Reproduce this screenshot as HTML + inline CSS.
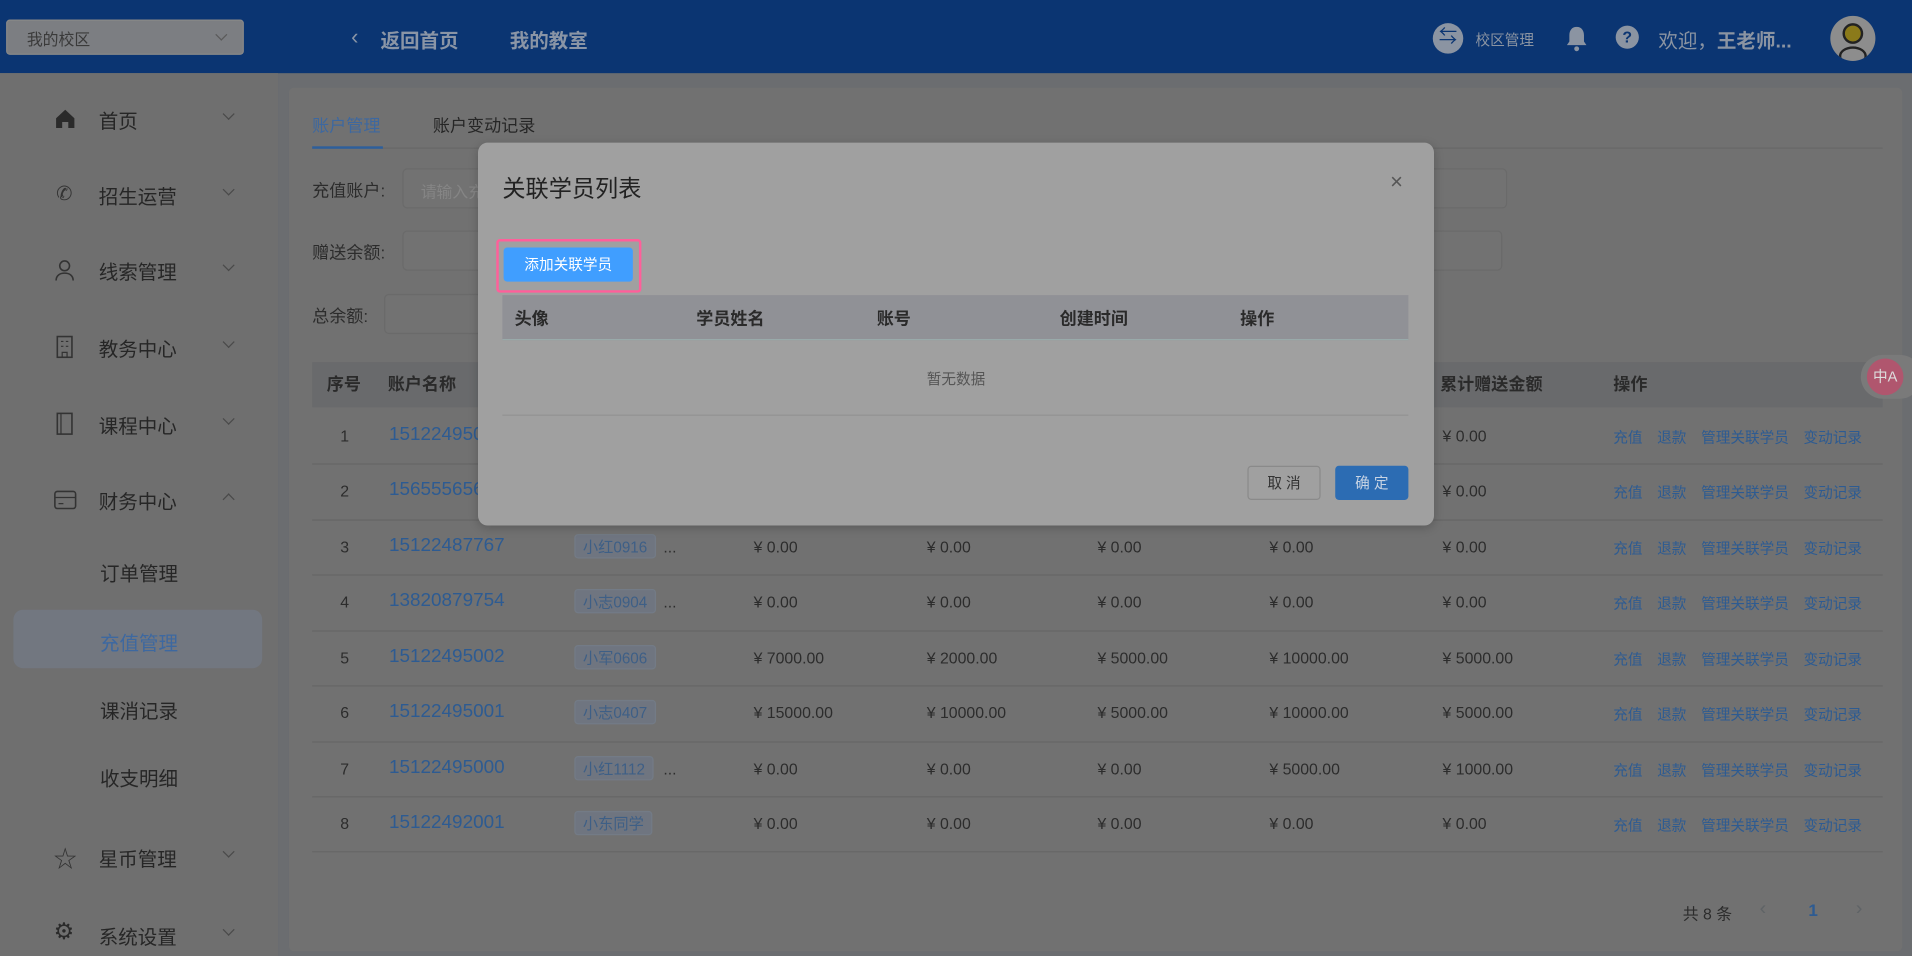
<!DOCTYPE html>
<html><head><meta charset="utf-8"><style>
*{margin:0;padding:0;box-sizing:border-box}
html,body{width:1912px;height:956px;overflow:hidden;background:#6b6d70}
#w{position:absolute;left:0;top:0;width:1568px;height:784px;transform:scale(1.219388);transform-origin:0 0;font-family:"Liberation Sans","Noto Sans CJK SC",sans-serif;color:#2b2b2b;background:#6b6d70}
.a{position:absolute;white-space:nowrap}
.hd{position:absolute;left:0;top:0;width:1568px;height:60px;background:#0b3572}
.sb{position:absolute;left:0;top:60px;width:228px;height:724px;background:#6f6f6f}
.card{position:absolute;left:237px;top:72px;width:1323px;height:708px;background:#717171;border-radius:4px}
.mi{font-size:16px;color:#262626}
.chev{position:absolute;width:7px;height:7px;border-right:1px solid #4a4a4a;border-bottom:1px solid #4a4a4a;transform:rotate(45deg)}
.row{position:absolute;left:256px;width:1288px;height:1px;background:#666}
.t{font-size:13px;color:#2c2c2c}
.lk{font-size:12px;color:#2d5b92;word-spacing:1px}
.lk span{margin-right:12px}
.tag{position:absolute;height:20px;padding:0 6px;font-size:12.5px;line-height:20px;color:#3e5f86;background:#6f7580;border:1px solid #737b86;border-radius:3px}
.inp{position:absolute;height:33px;border:1px solid #6a6a6a;border-radius:4px;background:#727272}
.num{font-size:15.5px;color:#2d5b92}
</style></head><body><div id="w">
<div class="hd"></div>
<div class="a" style="left:5px;top:16px;width:195px;height:29px;background:#7c7e82;border-radius:3px;border:1px solid #888"></div>
<div class="a" style="left:22px;top:22px;font-size:13px;color:#3a3a3a">我的校区</div>
<div class="chev" style="left:178px;top:25px;border-color:#5a5a5a"></div>
<div class="a" style="left:288px;top:20px;font-size:18px;color:#8a95a6">‹</div>
<div class="a" style="left:312px;top:20px;font-size:16px;font-weight:bold;color:#8a95a6">返回首页</div>
<div class="a" style="left:418px;top:20px;font-size:16px;font-weight:bold;color:#8a95a6">我的教室</div>
<div class="a" style="left:1175px;top:19px;width:25px;height:25px;border-radius:50%;background:#8b94a2;color:#0b3572;font-size:15px;text-align:center;line-height:24px">⇆</div>
<div class="a" style="left:1210px;top:24px;font-size:12px;color:#8b94a2">校区管理</div>
<svg class="a" style="left:1283px;top:21px" width="20" height="22" viewBox="0 0 20 22"><path d="M10 1c-4 0-6 3-6 7v5l-2 3h16l-2-3V8c0-4-2-7-6-7z" fill="#8b94a2"/><circle cx="10" cy="19" r="2" fill="#8b94a2"/></svg>
<div class="a" style="left:1325px;top:21px;width:19px;height:19px;border-radius:50%;background:#8b94a2;color:#0b3572;font-size:13px;font-weight:bold;text-align:center;line-height:19px">?</div>
<div class="a" style="left:1360px;top:20px;font-size:16px;color:#8b94a2">欢迎，<b>王老师...</b></div>
<div class="a" style="left:1501px;top:13px;width:37px;height:37px;border-radius:50%;background:#8d8d8d;overflow:hidden"><div style="position:absolute;left:10px;top:6px;width:17px;height:17px;border-radius:50%;background:#8b7a1a;border:2px solid #222"></div><div style="position:absolute;left:7px;top:25px;width:23px;height:16px;border-radius:50%;border:2px solid #222"></div></div>

<div class="sb"></div>
<svg class="a" style="left:45px;top:89px" width="17" height="17" viewBox="0 0 17 17"><path d="M8.5 1L1 8v8h5v-5h5v5h5V8z" fill="#2a2a2a"/></svg>
<div class="a mi" style="left:81px;top:86px">首页</div><div class="chev" style="left:184px;top:90px"></div>
<div class="a" style="left:46px;top:149px;font-size:16px;color:#333">✆</div>
<div class="a mi" style="left:81px;top:148px">招生运营</div><div class="chev" style="left:184px;top:152px"></div>
<svg class="a" style="left:45px;top:212px" width="16" height="19" viewBox="0 0 16 19"><circle cx="8" cy="6" r="4" fill="none" stroke="#333" stroke-width="1.3"/><path d="M1 18c0-4 3-6 7-6s7 2 7 6" fill="none" stroke="#333" stroke-width="1.3"/></svg>
<div class="a mi" style="left:81px;top:210px">线索管理</div><div class="chev" style="left:184px;top:214px"></div>
<svg class="a" style="left:45px;top:275px" width="16" height="19" viewBox="0 0 16 19"><rect x="2" y="1" width="12" height="17" fill="none" stroke="#333" stroke-width="1.3"/><path d="M5 5h2M9 5h2M5 9h2M9 9h2M6 18v-4h4v4" stroke="#333" fill="none"/></svg>
<div class="a mi" style="left:81px;top:273px">教务中心</div><div class="chev" style="left:184px;top:277px"></div>
<svg class="a" style="left:45px;top:338px" width="16" height="19" viewBox="0 0 16 19"><rect x="2" y="1" width="12" height="17" fill="none" stroke="#333" stroke-width="1.3"/><path d="M5 1v17" stroke="#333"/></svg>
<div class="a mi" style="left:81px;top:336px">课程中心</div><div class="chev" style="left:184px;top:340px"></div>
<svg class="a" style="left:44px;top:402px" width="19" height="16" viewBox="0 0 19 16"><rect x="1" y="1" width="17" height="14" rx="2" fill="none" stroke="#333" stroke-width="1.3"/><path d="M1 6h17M4 11h4" stroke="#333"/></svg>
<div class="a mi" style="left:81px;top:398px">财务中心</div><div class="chev" style="left:184px;top:406px;transform:rotate(225deg)"></div>
<div class="a mi" style="left:82px;top:457px">订单管理</div>
<div class="a" style="left:11px;top:500px;width:204px;height:48px;background:#727780;border-radius:8px"></div>
<div class="a mi" style="left:82px;top:514px;color:#3d68a0">充值管理</div>
<div class="a mi" style="left:82px;top:570px">课消记录</div>
<div class="a mi" style="left:82px;top:625px">收支明细</div>
<div class="a" style="left:44px;top:690px;font-size:19px;color:#333">☆</div>
<div class="a mi" style="left:81px;top:691px">星币管理</div><div class="chev" style="left:184px;top:695px"></div>
<div class="a" style="left:44px;top:753px;font-size:19px;color:#2a2a2a">⚙</div>
<div class="a mi" style="left:81px;top:755px">系统设置</div><div class="chev" style="left:184px;top:759px"></div>

<div class="card"></div>
<div class="a" style="left:256px;top:93px;font-size:14px;color:#3d68a0">账户管理</div>
<div class="a" style="left:355px;top:93px;font-size:14px;color:#262626">账户变动记录</div>
<div class="a" style="left:256px;top:121px;width:1288px;height:1px;background:#686868"></div>
<div class="a" style="left:256px;top:120px;width:58px;height:2px;background:#2d5f9c"></div>
<div class="a t" style="left:256px;top:146px;font-size:14px">充值账户:</div>
<div class="inp" style="left:330px;top:138px;width:906px"></div>
<div class="a" style="left:345px;top:147px;font-size:13px;color:#858585">请输入充</div>
<div class="a t" style="left:256px;top:197px;font-size:14px">赠送余额:</div>
<div class="inp" style="left:330px;top:189px;width:902px"></div>
<div class="a t" style="left:256px;top:249px;font-size:14px">总余额:</div>
<div class="inp" style="left:315px;top:241px;width:200px"></div>

<div class="a" style="left:256px;top:297px;width:1288px;height:37px;background:#696a6c"></div>
<div class="a" style="left:268px;top:305px;font-size:14px;font-weight:bold;color:#2a2a2a">序号</div>
<div class="a" style="left:318px;top:305px;font-size:14px;font-weight:bold;color:#2a2a2a">账户名称</div>
<div class="a" style="left:1181px;top:305px;font-size:14px;font-weight:bold;color:#2a2a2a">累计赠送金额</div>
<div class="a" style="left:1323px;top:305px;font-size:14px;font-weight:bold;color:#2a2a2a">操作</div>

<div class="a t" style="left:279px;top:350px">1</div><div class="a num" style="left:319px;top:348px">151224950</div>
<div class="a t" style="left:279px;top:395px">2</div><div class="a num" style="left:319px;top:393px">156555656</div>
<div class="row" style="top:380px"></div><div class="row" style="top:426px"></div><div class="row" style="top:471px"></div><div class="row" style="top:517px"></div><div class="row" style="top:562px"></div><div class="row" style="top:608px"></div><div class="row" style="top:653px"></div><div class="row" style="top:698px"></div>
<div class="a t" style="left:1183px;top:350px">¥ 0.00</div><div class="a t" style="left:1183px;top:395px">¥ 0.00</div>

<div class="a t" style="left:279px;top:441px">3</div><div class="a num" style="left:319px;top:439px">15122487767</div><div class="tag" style="left:471px;top:438px">小红0916</div><div class="a t" style="left:544px;top:441px">...</div>
<div class="a t" style="left:618px;top:441px">¥ 0.00</div><div class="a t" style="left:760px;top:441px">¥ 0.00</div><div class="a t" style="left:900px;top:441px">¥ 0.00</div><div class="a t" style="left:1041px;top:441px">¥ 0.00</div><div class="a t" style="left:1183px;top:441px">¥ 0.00</div>

<div class="a t" style="left:279px;top:486px">4</div><div class="a num" style="left:319px;top:484px">13820879754</div><div class="tag" style="left:471px;top:483px">小志0904</div><div class="a t" style="left:544px;top:486px">...</div>
<div class="a t" style="left:618px;top:486px">¥ 0.00</div><div class="a t" style="left:760px;top:486px">¥ 0.00</div><div class="a t" style="left:900px;top:486px">¥ 0.00</div><div class="a t" style="left:1041px;top:486px">¥ 0.00</div><div class="a t" style="left:1183px;top:486px">¥ 0.00</div>

<div class="a t" style="left:279px;top:532px">5</div><div class="a num" style="left:319px;top:530px">15122495002</div><div class="tag" style="left:471px;top:529px">小军0606</div>
<div class="a t" style="left:618px;top:532px">¥ 7000.00</div><div class="a t" style="left:760px;top:532px">¥ 2000.00</div><div class="a t" style="left:900px;top:532px">¥ 5000.00</div><div class="a t" style="left:1041px;top:532px">¥ 10000.00</div><div class="a t" style="left:1183px;top:532px">¥ 5000.00</div>

<div class="a t" style="left:279px;top:577px">6</div><div class="a num" style="left:319px;top:575px">15122495001</div><div class="tag" style="left:471px;top:574px">小志0407</div>
<div class="a t" style="left:618px;top:577px">¥ 15000.00</div><div class="a t" style="left:760px;top:577px">¥ 10000.00</div><div class="a t" style="left:900px;top:577px">¥ 5000.00</div><div class="a t" style="left:1041px;top:577px">¥ 10000.00</div><div class="a t" style="left:1183px;top:577px">¥ 5000.00</div>

<div class="a t" style="left:279px;top:623px">7</div><div class="a num" style="left:319px;top:621px">15122495000</div><div class="tag" style="left:471px;top:620px">小红1112</div><div class="a t" style="left:544px;top:623px">...</div>
<div class="a t" style="left:618px;top:623px">¥ 0.00</div><div class="a t" style="left:760px;top:623px">¥ 0.00</div><div class="a t" style="left:900px;top:623px">¥ 0.00</div><div class="a t" style="left:1041px;top:623px">¥ 5000.00</div><div class="a t" style="left:1183px;top:623px">¥ 1000.00</div>

<div class="a t" style="left:279px;top:668px">8</div><div class="a num" style="left:319px;top:666px">15122492001</div><div class="tag" style="left:471px;top:665px">小东同学</div>
<div class="a t" style="left:618px;top:668px">¥ 0.00</div><div class="a t" style="left:760px;top:668px">¥ 0.00</div><div class="a t" style="left:900px;top:668px">¥ 0.00</div><div class="a t" style="left:1041px;top:668px">¥ 0.00</div><div class="a t" style="left:1183px;top:668px">¥ 0.00</div>

<div class="a lk" style="left:1323px;top:350px"><span>充值</span><span>退款</span><span>管理关联学员</span>变动记录</div>
<div class="a lk" style="left:1323px;top:395px"><span>充值</span><span>退款</span><span>管理关联学员</span>变动记录</div>
<div class="a lk" style="left:1323px;top:441px"><span>充值</span><span>退款</span><span>管理关联学员</span>变动记录</div>
<div class="a lk" style="left:1323px;top:486px"><span>充值</span><span>退款</span><span>管理关联学员</span>变动记录</div>
<div class="a lk" style="left:1323px;top:532px"><span>充值</span><span>退款</span><span>管理关联学员</span>变动记录</div>
<div class="a lk" style="left:1323px;top:577px"><span>充值</span><span>退款</span><span>管理关联学员</span>变动记录</div>
<div class="a lk" style="left:1323px;top:623px"><span>充值</span><span>退款</span><span>管理关联学员</span>变动记录</div>
<div class="a lk" style="left:1323px;top:668px"><span>充值</span><span>退款</span><span>管理关联学员</span>变动记录</div>

<div class="a t" style="left:1380px;top:739px">共 8 条</div>
<div class="a" style="left:1443px;top:737px;font-size:16px;color:#5f6366">‹</div>
<div class="a" style="left:1483px;top:738px;font-size:14px;font-weight:bold;color:#2d5b92">1</div>
<div class="a" style="left:1522px;top:737px;font-size:16px;color:#5f6366">›</div>

<div class="a" style="left:1526px;top:291px;width:50px;height:36px;border-radius:18px;background:#7a7a7a"></div>
<div class="a" style="left:1531px;top:294px;width:30px;height:30px;border-radius:50%;background:#b0566e;color:#ddd;font-size:12px;line-height:30px;text-align:center">中A</div>

<div class="a" style="left:392px;top:117px;width:784px;height:314px;background:#a0a0a0;border-radius:8px;box-shadow:0 2px 8px rgba(0,0,0,.2)"></div>
<div class="a" style="left:412px;top:140px;font-size:19px;color:#222">关联学员列表</div>
<div class="a" style="left:1140px;top:139px;font-size:18px;color:#555">×</div>
<div class="a" style="left:407px;top:196px;width:119px;height:44px;border:2px solid #ff5f9a;border-radius:3px"></div>
<div class="a" style="left:413px;top:203px;width:106px;height:28px;background:#409eff;border-radius:3px;color:#fff;font-size:12px;text-align:center;line-height:28px">添加关联学员</div>
<div class="a" style="left:412px;top:242px;width:743px;height:37px;background:#909196;border-bottom:1px solid #9aa"></div>
<div class="a" style="left:422px;top:251px;font-size:14px;font-weight:bold;color:#2a2a2a">头像</div>
<div class="a" style="left:571px;top:251px;font-size:14px;font-weight:bold;color:#2a2a2a">学员姓名</div>
<div class="a" style="left:719px;top:251px;font-size:14px;font-weight:bold;color:#2a2a2a">账号</div>
<div class="a" style="left:869px;top:251px;font-size:14px;font-weight:bold;color:#2a2a2a">创建时间</div>
<div class="a" style="left:1017px;top:251px;font-size:14px;font-weight:bold;color:#2a2a2a">操作</div>
<div class="a" style="left:760px;top:302px;font-size:12px;color:#555">暂无数据</div>
<div class="a" style="left:412px;top:340px;width:743px;height:1px;background:#939393"></div>
<div class="a" style="left:1023px;top:382px;width:60px;height:28px;border:1px solid #8a8a8a;border-radius:3px;font-size:12px;color:#333;text-align:center;line-height:26px">取 消</div>
<div class="a" style="left:1095px;top:382px;width:60px;height:28px;background:#2c6cb3;border-radius:3px;font-size:12px;color:#c8d4e4;text-align:center;line-height:28px">确 定</div>
</div></body></html>
